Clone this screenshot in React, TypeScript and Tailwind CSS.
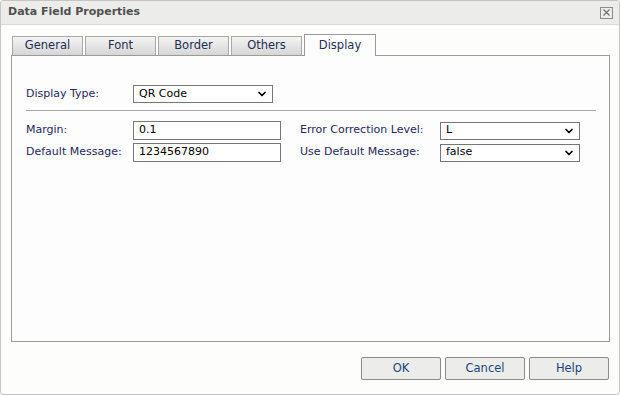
import { ChevronDown } from "lucide-react";

const font = { fontFamily: '"DejaVu Sans", Tahoma, sans-serif' };

function Select({ value, width }: { value: string; width: string }) {
  return (
    <div
      className={`flex h-[18px] items-center justify-between border border-[#767676] bg-white pl-[5px] pr-[4px] text-[11px] text-black ${width}`}
    >
      <span>{value}</span>
      <ChevronDown size={12} strokeWidth={3.5} className="text-black" />
    </div>
  );
}

function TextInput({ value }: { value: string }) {
  return (
    <div className="flex h-[19px] w-[148px] items-center border border-[#767676] bg-white px-[5px] text-[11px] text-black">
      {value}
    </div>
  );
}

function Tab({ label, active = false }: { label: string; active?: boolean }) {
  if (active) {
    return (
      <div className="relative z-10 -mb-px flex h-[22px] w-[72px] items-center justify-center border border-b-0 border-[#9a9a9a] bg-[#fdfdfd] text-[11.5px] text-[#1c2f52]">
        {label}
      </div>
    );
  }
  return (
    <div className="mt-[2px] flex h-[19px] w-[71px] items-center justify-center border border-b-0 border-[#a8a8a8] bg-gradient-to-b from-[#f4f4f4] to-[#d6d6d6] text-[11.5px] text-[#1c2f52]">
      {label}
    </div>
  );
}

export default function App() {
  return (
    <div
      style={font}
      className="flex h-[395px] w-[620px] flex-col overflow-hidden rounded-[3px] border border-[#c4c4c4] bg-[#fdfdfc]"
    >
      {/* Title bar */}
      <div className="flex h-[24px] shrink-0 items-center justify-between border-b border-[#d8d8d8] bg-[#ececeb] pl-[7px] pr-[6px]">
        <span className="text-[11px] font-bold text-[#505050]">Data Field Properties</span>
        <div className="flex h-[12px] w-[13px] items-center justify-center border border-[#8c8c8c]">
          <svg width="7" height="7" viewBox="0 0 7 7">
            <path d="M0.5 0.5 L6.5 6.5 M6.5 0.5 L0.5 6.5" stroke="#777" strokeWidth="1.3" />
          </svg>
        </div>
      </div>

      {/* Tabs */}
      <div className="flex flex-1 flex-col pl-[10px] pr-[9px] pt-[9px]">
        <div className="flex items-end gap-[2px] pl-[1px]">
          <Tab label="General" />
          <Tab label="Font" />
          <Tab label="Border" />
          <Tab label="Others" />
          <Tab label="Display" active />
        </div>

        {/* Panel */}
        <div className="h-[287px] border border-[#9a9a9a] bg-[#fdfdfd] pl-[14px] pr-[13px] pt-[29px] text-[11px] text-[#27275a]">
          <div className="flex items-center">
            <span className="w-[107px]">Display Type:</span>
            <Select value="QR Code" width="w-[140px]" />
          </div>
          <div className="mt-[7px] mb-[10px] border-t border-[#a8a8a8]" />
          <div className="grid grid-cols-[107px_167px_140px_140px] gap-y-[3px] items-center">
            <span>Margin:</span>
            <TextInput value="0.1" />
            <span>Error Correction Level:</span>
            <Select value="L" width="w-[140px]" />
            <span>Default Message:</span>
            <TextInput value="1234567890" />
            <span>Use Default Message:</span>
            <Select value="false" width="w-[140px]" />
          </div>
        </div>

        {/* Buttons */}
        <div className="mt-[15px] mr-[1px] flex justify-end gap-[4px]">
          {["OK", "Cancel", "Help"].map((b) => (
            <div
              key={b}
              className="flex h-[23px] w-[80px] items-center justify-center rounded-[2px] border border-[#8a8a8a] bg-[#ececeb] text-[11.5px] text-[#17457a]"
            >
              {b}
            </div>
          ))}
        </div>
      </div>
    </div>
  );
}
